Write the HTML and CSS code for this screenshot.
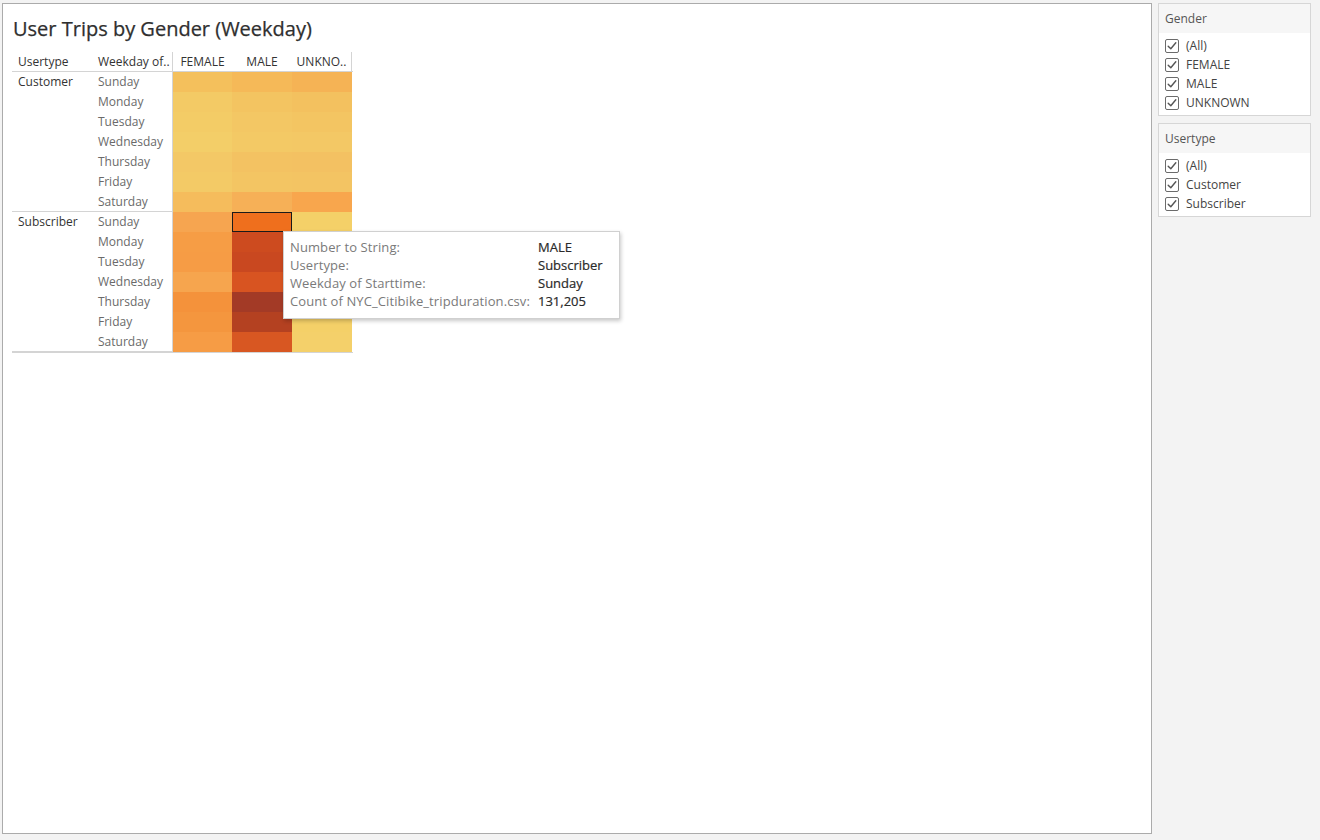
FILE: index.html
```html
<!DOCTYPE html>
<html lang="en">
<head>
<meta charset="utf-8">
<title>User Trips by Gender (Weekday)</title>
<link rel="stylesheet" href="styles.css">
</head>
<body>
<div class="page">
  <main class="sheet">
    <h1 class="title">User Trips by Gender (Weekday)</h1>
    <div class="xtab">
      <div class="hdr">
        <div class="rh c1">Usertype</div>
        <div class="rh c2">Weekday of..</div>
        <div class="ch">FEMALE</div>
        <div class="ch">MALE</div>
        <div class="ch last">UNKNO..</div>
      </div>
      <div class="group">
        <div class="rowhdrs">
          <div class="ut">Customer</div>
          <div class="days">
            <div class="day">Sunday</div>
            <div class="day">Monday</div>
            <div class="day">Tuesday</div>
            <div class="day">Wednesday</div>
            <div class="day">Thursday</div>
            <div class="day">Friday</div>
            <div class="day">Saturday</div>
          </div>
        </div>
        <div class="heat">
          <div class="cell" style="background:#f4c05c"></div><div class="cell" style="background:#f5b958"></div><div class="cell" style="background:#f5b355"></div>
          <div class="cell" style="background:#f3ca65"></div><div class="cell" style="background:#f3c461"></div><div class="cell" style="background:#f3c15f"></div>
          <div class="cell" style="background:#f3cc66"></div><div class="cell" style="background:#f3c764"></div><div class="cell" style="background:#f3c562"></div>
          <div class="cell" style="background:#f3ce68"></div><div class="cell" style="background:#f3c965"></div><div class="cell" style="background:#f3c865"></div>
          <div class="cell" style="background:#f3c866"></div><div class="cell" style="background:#f3c262"></div><div class="cell" style="background:#f3c162"></div>
          <div class="cell" style="background:#f3ca66"></div><div class="cell" style="background:#f3c563"></div><div class="cell" style="background:#f3c463"></div>
          <div class="cell" style="background:#f5bc5c"></div><div class="cell" style="background:#f6b057"></div><div class="cell" style="background:#f8a64d"></div>
        </div>
      </div>
      <div class="group">
        <div class="rowhdrs">
          <div class="ut">Subscriber</div>
          <div class="days">
            <div class="day">Sunday</div>
            <div class="day">Monday</div>
            <div class="day">Tuesday</div>
            <div class="day">Wednesday</div>
            <div class="day">Thursday</div>
            <div class="day">Friday</div>
            <div class="day">Saturday</div>
          </div>
        </div>
        <div class="heat">
          <div class="cell" style="background:#f6a550"></div><div class="cell selected" style="background:#ef6f1d"></div><div class="cell" style="background:#f4d068"></div>
          <div class="cell" style="background:#f69d45"></div><div class="cell" style="background:#cd4b1f"></div><div class="cell" style="background:#f4d068"></div>
          <div class="cell" style="background:#f69c45"></div><div class="cell" style="background:#c94820"></div><div class="cell" style="background:#f4d068"></div>
          <div class="cell" style="background:#f6a54e"></div><div class="cell" style="background:#d85421"></div><div class="cell" style="background:#f4d06a"></div>
          <div class="cell" style="background:#f4923b"></div><div class="cell" style="background:#a33a26"></div><div class="cell" style="background:#f4cf68"></div>
          <div class="cell" style="background:#f4963e"></div><div class="cell" style="background:#b44121"></div><div class="cell" style="background:#f4d068"></div>
          <div class="cell" style="background:#f69c45"></div><div class="cell" style="background:#d85722"></div><div class="cell" style="background:#f4d06a"></div>
        </div>
      </div>
    </div>
    <div class="tooltip">
      <div class="tk">Number to String:</div><div class="tv">MALE</div>
      <div class="tk">Usertype:</div><div class="tv">Subscriber</div>
      <div class="tk">Weekday of Starttime:</div><div class="tv">Sunday</div>
      <div class="tk">Count of NYC_Citibike_tripduration.csv:</div><div class="tv">131,205</div>
    </div>
  </main>
  <aside class="side">
    <section class="filter">
      <div class="fh">Gender</div>
      <ul class="fl">
        <li><svg class="cb" viewBox="0 0 14 14"><rect x="0.5" y="0.5" width="13" height="13" rx="1.5"/><path d="M3.2 7.2 L5.8 9.8 L10.8 3.8"/></svg>(All)</li>
        <li><svg class="cb" viewBox="0 0 14 14"><rect x="0.5" y="0.5" width="13" height="13" rx="1.5"/><path d="M3.2 7.2 L5.8 9.8 L10.8 3.8"/></svg>FEMALE</li>
        <li><svg class="cb" viewBox="0 0 14 14"><rect x="0.5" y="0.5" width="13" height="13" rx="1.5"/><path d="M3.2 7.2 L5.8 9.8 L10.8 3.8"/></svg>MALE</li>
        <li><svg class="cb" viewBox="0 0 14 14"><rect x="0.5" y="0.5" width="13" height="13" rx="1.5"/><path d="M3.2 7.2 L5.8 9.8 L10.8 3.8"/></svg>UNKNOWN</li>
      </ul>
    </section>
    <section class="filter">
      <div class="fh">Usertype</div>
      <ul class="fl">
        <li><svg class="cb" viewBox="0 0 14 14"><rect x="0.5" y="0.5" width="13" height="13" rx="1.5"/><path d="M3.2 7.2 L5.8 9.8 L10.8 3.8"/></svg>(All)</li>
        <li><svg class="cb" viewBox="0 0 14 14"><rect x="0.5" y="0.5" width="13" height="13" rx="1.5"/><path d="M3.2 7.2 L5.8 9.8 L10.8 3.8"/></svg>Customer</li>
        <li><svg class="cb" viewBox="0 0 14 14"><rect x="0.5" y="0.5" width="13" height="13" rx="1.5"/><path d="M3.2 7.2 L5.8 9.8 L10.8 3.8"/></svg>Subscriber</li>
      </ul>
    </section>
  </aside>
</div>
</body>
</html>
```

FILE: styles.css
```css
* { box-sizing: border-box; }
html, body { margin: 0; padding: 0; }
body {
  background: #f3f3f3;
  font-family: "Open Sans", "Noto Sans", sans-serif;
  font-size: 12px;
  color: #333;
  width: 1320px;
  height: 840px;
  overflow: hidden;
}
.page {
  display: flex;
  align-items: flex-start;
  padding: 3px 0 0 2px;
}
.sheet {
  position: relative;
  width: 1150px;
  height: 831px;
  background: #fff;
  border: 1px solid #ababab;
  padding: 0 0 0 9px;
}
.title {
  margin: 0;
  padding: 11px 0 0 1px;
  height: 48px;
  font-size: 20px;
  font-weight: 400;
  line-height: 28px;
  color: #2f2f2f;
  -webkit-text-stroke: 0.25px #2f2f2f;
}
.xtab {
  width: 341px;
  border-bottom: 1px solid #d4d4d4;
}
.hdr {
  display: flex;
  height: 20px;
  border-bottom: 1px solid #d4d4d4;
  line-height: 19px;
  color: #333;
}
.rh { width: 80px; padding-left: 6px; white-space: nowrap; overflow: hidden; }
.rh.c2 { border-right: 1px solid #d4d4d4; width: 81px; }
.ch { width: 60px; text-align: center; white-space: nowrap; }
.ch.last { border-right: 1px solid #d4d4d4; }
.hdr .ch:nth-child(3) { width: 59px; }
.group {
  display: flex;
  height: 140px;
}
.rowhdrs {
  display: flex;
  width: 161px;
  border-right: 1px solid #d4d4d4;
  box-shadow: inset 0 -1px 0 #d4d4d4;
}
.ut {
  width: 80px;
  padding-left: 6px;
  line-height: 19px;
  color: #333;
}
.days { width: 80px; }
.day {
  height: 20px;
  line-height: 19px;
  padding-left: 6px;
  color: #6a6a6a;
}
.heat {
  display: grid;
  grid-template-columns: 59px 60px 60px;
  grid-auto-rows: 20px;
}
.cell.selected { box-shadow: inset 0 0 0 1px #1a1a1a; }
.tooltip {
  position: absolute;
  left: 280px;
  top: 227px;
  width: 337px;
  height: 88px;
  background: #fff;
  border: 1px solid #d0d0d0;
  box-shadow: 1px 2px 4px rgba(0,0,0,0.22);
  padding: 6px 0 0 6px;
  display: grid;
  grid-template-columns: 248px auto;
  grid-auto-rows: 18px;
  line-height: 19px;
  font-size: 13px;
}
.tk { color: #7a7a7a; white-space: nowrap; letter-spacing: 0.1px; }
.tv { color: #2a2a2a; white-space: nowrap; -webkit-text-stroke: 0.2px #2a2a2a; }
.side {
  margin-left: 6px;
  width: 153px;
  display: flex;
  flex-direction: column;
  gap: 7px;
}
.filter {
  background: #fff;
  border: 1px solid #d6d6d6;
}
.fh {
  background: #f6f6f6;
  height: 29px;
  line-height: 29px;
  padding-left: 6px;
  color: #555;
}
.fl {
  list-style: none;
  margin: 0;
  padding: 3px 0 3px 6px;
}
.fl li {
  display: flex;
  align-items: center;
  height: 19px;
  color: #444;
}
.cb {
  width: 14px;
  height: 14px;
  margin-right: 7px;
  flex: none;
}
.cb rect { fill: #fff; stroke: #6b6b6b; stroke-width: 1; }
.cb path { fill: none; stroke: #555; stroke-width: 1.4; stroke-linecap: round; stroke-linejoin: round; }
```
